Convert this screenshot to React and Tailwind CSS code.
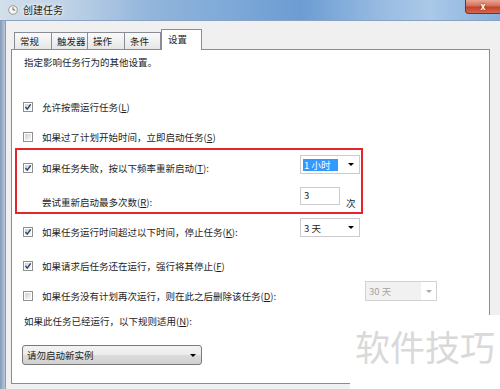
import React from "react";

// Win7-style checkbox
function Check({ checked }) {
  return (
    <svg width="10" height="10" viewBox="0 0 10 10" className="shrink-0">
      <defs>
        <linearGradient id="cbg" x1="0" y1="0" x2="1" y2="1">
          <stop offset="0" stopColor="#cdd1d7" />
          <stop offset="1" stopColor="#f8f8f8" />
        </linearGradient>
      </defs>
      <rect x="0.5" y="0.5" width="9" height="9" fill="#fff" stroke="#8e8f8f" />
      <rect x="2" y="2" width="6" height="6" fill="url(#cbg)" />
      {checked && (
        <path d="M2.4 4.9 L4.2 7.1 L7.7 2.4" stroke="#2e4270" strokeWidth="1.5" fill="none" />
      )}
    </svg>
  );
}

function Arrow({ color = "#000" }) {
  return (
    <svg width="6" height="3" viewBox="0 0 6 3" className="shrink-0">
      <path d="M0 0 H6 L3 3 Z" fill={color} />
    </svg>
  );
}

const K = ({ children }) => <span className="underline underline-offset-1">{children}</span>;

function CheckRow({ checked, children, width = "w-[288px]", className = "" }) {
  return (
    <div className={`flex h-[14px] shrink-0 items-center gap-[9px] pl-[11px] ${width} ${className}`}>
      <Check checked={checked} />
      <span className="whitespace-nowrap">{children}</span>
    </div>
  );
}

function Combo({ children, className = "" }) {
  return (
    <div className={`flex h-[19px] w-[60px] items-center justify-between border border-[#c9cbd0] bg-white pl-[2px] pr-[5px] ${className}`}>
      {children}
      <Arrow />
    </div>
  );
}

const tabs = ["常规", "触发器", "操作", "条件"];
const tabW = ["w-[38px]", "w-[37px]", "w-[38px]", "w-[37px]"];

export default function App() {
  return (
    <div className="relative h-[389px] w-[500px] overflow-hidden bg-[#f0f0f0] font-['Noto_Sans_CJK_SC','Noto_Sans',sans-serif] text-[9.5px] leading-[12px] text-[#1e1e1e]">
      {/* title bar */}
      <div className="flex h-[21px] items-start border-b border-[#8aa3c2] bg-[linear-gradient(to_right,#d2dfeb_0%,#bdd1e6_14%,#92b5db_30%,#7ea9d8_46%,#6c9cd3_60%,#97bbe1_76%,#abc9e8_86%,#86afdc_100%)]">
        <svg width="10" height="10" viewBox="0 0 10 10" className="ml-[8px] mt-[5px] shrink-0">
          <circle cx="5" cy="5" r="4.3" fill="#f7f7f2" stroke="#8d8f86" strokeWidth="0.9" />
          <path d="M5 2.2 V5 H7.2" stroke="#55574f" strokeWidth="0.9" fill="none" />
        </svg>
        <span className="ml-[5px] mt-[4px] text-[10px] leading-[12px] text-[#1b1b1b] [text-shadow:0_0_6px_#fff,0_0_3px_#fff]">
          创建任务
        </span>
        <div className="ml-auto flex h-[14px] w-[35px] items-center justify-center rounded-bl-[4px] border-b border-l border-[#7e2f25] bg-[linear-gradient(to_bottom,#e9a795_0%,#d4705a_45%,#c2432c_55%,#d46a4e_100%)]">
          <span className="text-[9px] font-bold leading-[9px] text-white [text-shadow:0_0_2px_#5a1a10]">x</span>
        </div>
      </div>

      <div className="flex">
        {/* left glass frame */}
        <div className="h-[368px] w-[6px] shrink-0 border-r border-[#8e9bab] bg-[linear-gradient(to_right,#8399b6,#b9c8d9)]" />

        <div className="pl-[5px] pt-[8px]">
          {/* tabs */}
          <div className="relative z-10 ml-[3px] flex h-[20px] items-end">
            {tabs.map((t, i) => (
              <div
                key={t}
                className={`flex h-[17px] ${tabW[i]} items-center border border-b-0 border-[#898c95] bg-[linear-gradient(to_bottom,#fafafa,#e6e6e6)] pl-[5px] ${i ? "-ml-px" : ""}`}
              >
                {t}
              </div>
            ))}
            <div className="-mb-px flex h-[21px] w-[41px] items-start border border-b-0 border-[#898c95] bg-white pl-[6px] pt-[3px]">
              设置
            </div>
          </div>

          {/* panel */}
          <div className="flex h-[335px] w-[479px] flex-col border border-[#898c95] bg-white">
            <div className="mt-[6px] h-[12px] pl-[12px]">指定影响任务行为的其他设置。</div>

            <CheckRow checked className="mt-[32px]">
              允许按需运行任务(<K>L</K>)
            </CheckRow>
            <CheckRow className="mt-[16px]">
              如果过了计划开始时间，立即启动任务(<K>S</K>)
            </CheckRow>

            <div className="mt-[11px] flex items-start">
              <CheckRow checked className="mt-[6px]">
                如果任务失败，按以下频率重新启动(<K>T</K>):
              </CheckRow>
              <Combo>
                <span className="bg-[#3399ff] px-[1px] text-white">1 小时&nbsp;&nbsp;&nbsp;</span>
              </Combo>
            </div>

            <div className="mt-[12px] flex items-start">
              <div className="mt-[8px] flex h-[14px] w-[288px] items-center pl-[30px] whitespace-nowrap">
                尝试重新启动最多次数(<K>R</K>):
              </div>
              <div className="h-[18px] w-[40px] border border-[#c9cbd0] bg-white pl-[3px] pt-[1px]">3</div>
              <span className="ml-[6px] mt-[10px]">次</span>
            </div>

            <div className="mt-[9px] flex items-start">
              <CheckRow checked className="mt-[7px]">
                如果任务运行时间超过以下时间，停止任务(<K>K</K>):
              </CheckRow>
              <Combo>
                <span className="pl-[1px]">3 天</span>
              </Combo>
            </div>

            <CheckRow checked className="mt-[20px]">
              如果请求后任务还在运行，强行将其停止(<K>F</K>)
            </CheckRow>

            <div className="mt-[8px] flex items-start">
              <CheckRow width="w-[353px]" className="mt-[8px]">
                如果任务没有计划再次运行，则在此之后删除该任务(<K>D</K>):
              </CheckRow>
              <div className="flex h-[20px] w-[72px] border border-[#d3d3d3] bg-white">
                <div className="flex flex-1 items-center bg-[#f1f1f1] pl-[3px] text-[#a3a3a3]">30 天</div>
                <div className="flex w-[15px] items-center justify-center">
                  <Arrow color="#a8a8a8" />
                </div>
              </div>
            </div>

            <div className="mt-[11px] flex h-[14px] items-center pl-[12px] whitespace-nowrap">
              如果此任务已经运行，以下规则适用(<K>N</K>):
            </div>

            <div className="ml-[10px] mt-[17px] flex h-[20px] w-[180px] items-center justify-between rounded-[3px] border border-[#7a7a7a] bg-[linear-gradient(to_bottom,#f3f3f3_0%,#ebebeb_50%,#dcdcdc_51%,#d0d0d0_100%)] pl-[4px] pr-[5px]">
              <span>请勿启动新实例</span>
              <Arrow />
            </div>
          </div>
        </div>
      </div>

      {/* red annotation box */}
      <div className="pointer-events-none absolute left-[15px] top-[148px] h-[66px] w-[348px] border-2 border-[#e3262b]" />

      {/* watermark */}
      <div className="absolute left-[350px] top-[315px] flex h-[74px] w-[150px] items-start bg-white pl-[5px] pt-[12px]">
        <span className="text-[35px] leading-[38px] tracking-[0px] text-[#d9d9d9]">软件技巧</span>
      </div>
    </div>
  );
}
